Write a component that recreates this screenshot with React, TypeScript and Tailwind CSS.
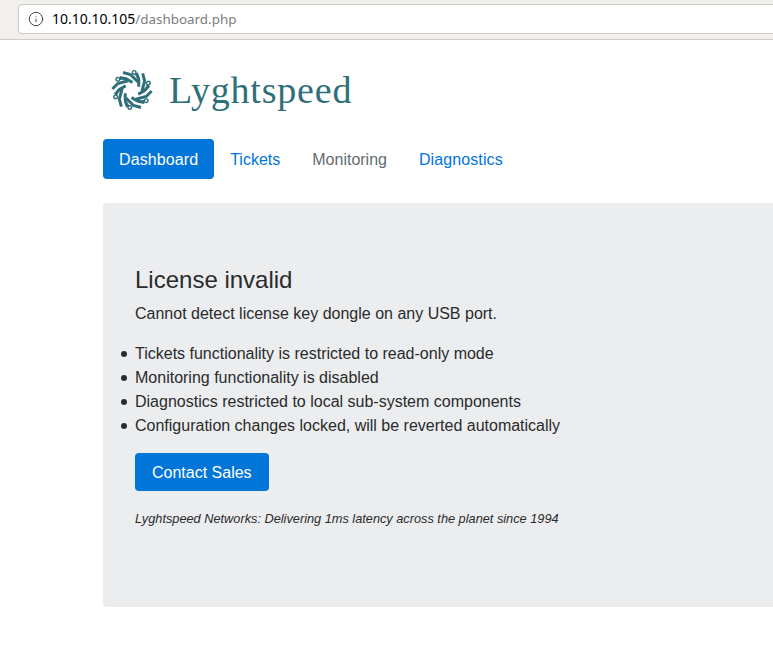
import { Info } from "lucide-react"

const Logo = () => {
  const angles = [0, 60, 120, 180, 240, 300]
  return (
    <svg width="44" height="44" viewBox="-22 -22 44 44" fill="none" stroke="#2f6f7a">
      {angles.map((a) => (
        <g key={a} transform={`rotate(${a})`}>
          <path d="M-9 -17.5 L-1.5 -15.5 L6 -8" strokeWidth="3" />
          <path d="M-12.5 -12.5 L-5.5 -11 L0.5 -7.5" strokeWidth="3" />
          <path d="M3 -16 L7.5 -12" strokeWidth="1.6" />
          <circle cx="2.2" cy="-17.6" r="1.8" strokeWidth="1.4" fill="#fff" />
        </g>
      ))}
    </svg>
  )
}

const BrowserBar = () => {
  return (
    <div className="flex h-10 items-start border-b border-[#cfcbc5] bg-[#f2f0ec] pt-1 pl-[18px]">
      <div className="flex h-[30px] flex-1 items-center rounded-l border border-r-0 border-[#cfcbc5] bg-white pl-[9px] font-['Noto_Sans',sans-serif]">
        <Info size={16} strokeWidth={1.5} className="mr-[8px] text-[#444]" />
        <span className="text-[14px] text-black">10.10.10.105</span>
        <span className="text-[13.4px] text-[#7d7d7d]">/dashboard.php</span>
      </div>
    </div>
  )
}

const Bullet = ({ children }: { children: string }) => {
  return (
    <li className="-ml-[14px] flex items-center">
      <span className="mr-2 h-[6px] w-[6px] rounded-full bg-[#292b2c]"></span>
      {children}
    </li>
  )
}

export default function App() {
  return (
    <div className="min-h-[661px] overflow-hidden bg-white font-['Liberation_Sans',sans-serif] text-[16px] leading-6 text-[#292b2c]">
      <BrowserBar />
      <div className="pl-[103px]">
        <div className="flex h-[99px] items-center pl-[7px] pt-[1px]">
          <Logo />
          <span className="ml-[15px] font-['Liberation_Serif',serif] text-[38px] leading-none tracking-[0.8px] text-[#2f6f7a]">
            Lyghtspeed
          </span>
        </div>
        <nav className="flex">
          <a className="rounded bg-[#0275d8] px-4 pt-[9px] pb-[7px] tracking-[0.1px] text-white">Dashboard</a>
          <a className="px-4 pt-[9px] pb-[7px] text-[#0275d8]">Tickets</a>
          <a className="px-4 pt-[9px] pb-[7px] text-[#636c72]">Monitoring</a>
          <a className="px-4 pt-[9px] pb-[7px] tracking-[0.1px] text-[#0275d8]">Diagnostics</a>
        </nav>
        <div className="mt-6 h-[404px] rounded-l bg-[#ecedef] px-8 pt-[63px]">
          <h3 className="mb-[7px] text-[24px] leading-[28.8px] font-medium">License invalid</h3>
          <p className="mb-4">Cannot detect license key dongle on any USB port.</p>
          <ul className="mb-[15px]">
            <Bullet>Tickets functionality is restricted to read-only mode</Bullet>
            <Bullet>Monitoring functionality is disabled</Bullet>
            <Bullet>Diagnostics restricted to local sub-system components</Bullet>
            <Bullet>Configuration changes locked, will be reverted automatically</Bullet>
          </ul>
          <button className="rounded bg-[#0275d8] px-[17px] pt-2 pb-[6px] text-white">Contact Sales</button>
          <p className="mt-4 text-[12.75px] italic">Lyghtspeed Networks: Delivering 1ms latency across the planet since 1994</p>
        </div>
      </div>
    </div>
  )
}
